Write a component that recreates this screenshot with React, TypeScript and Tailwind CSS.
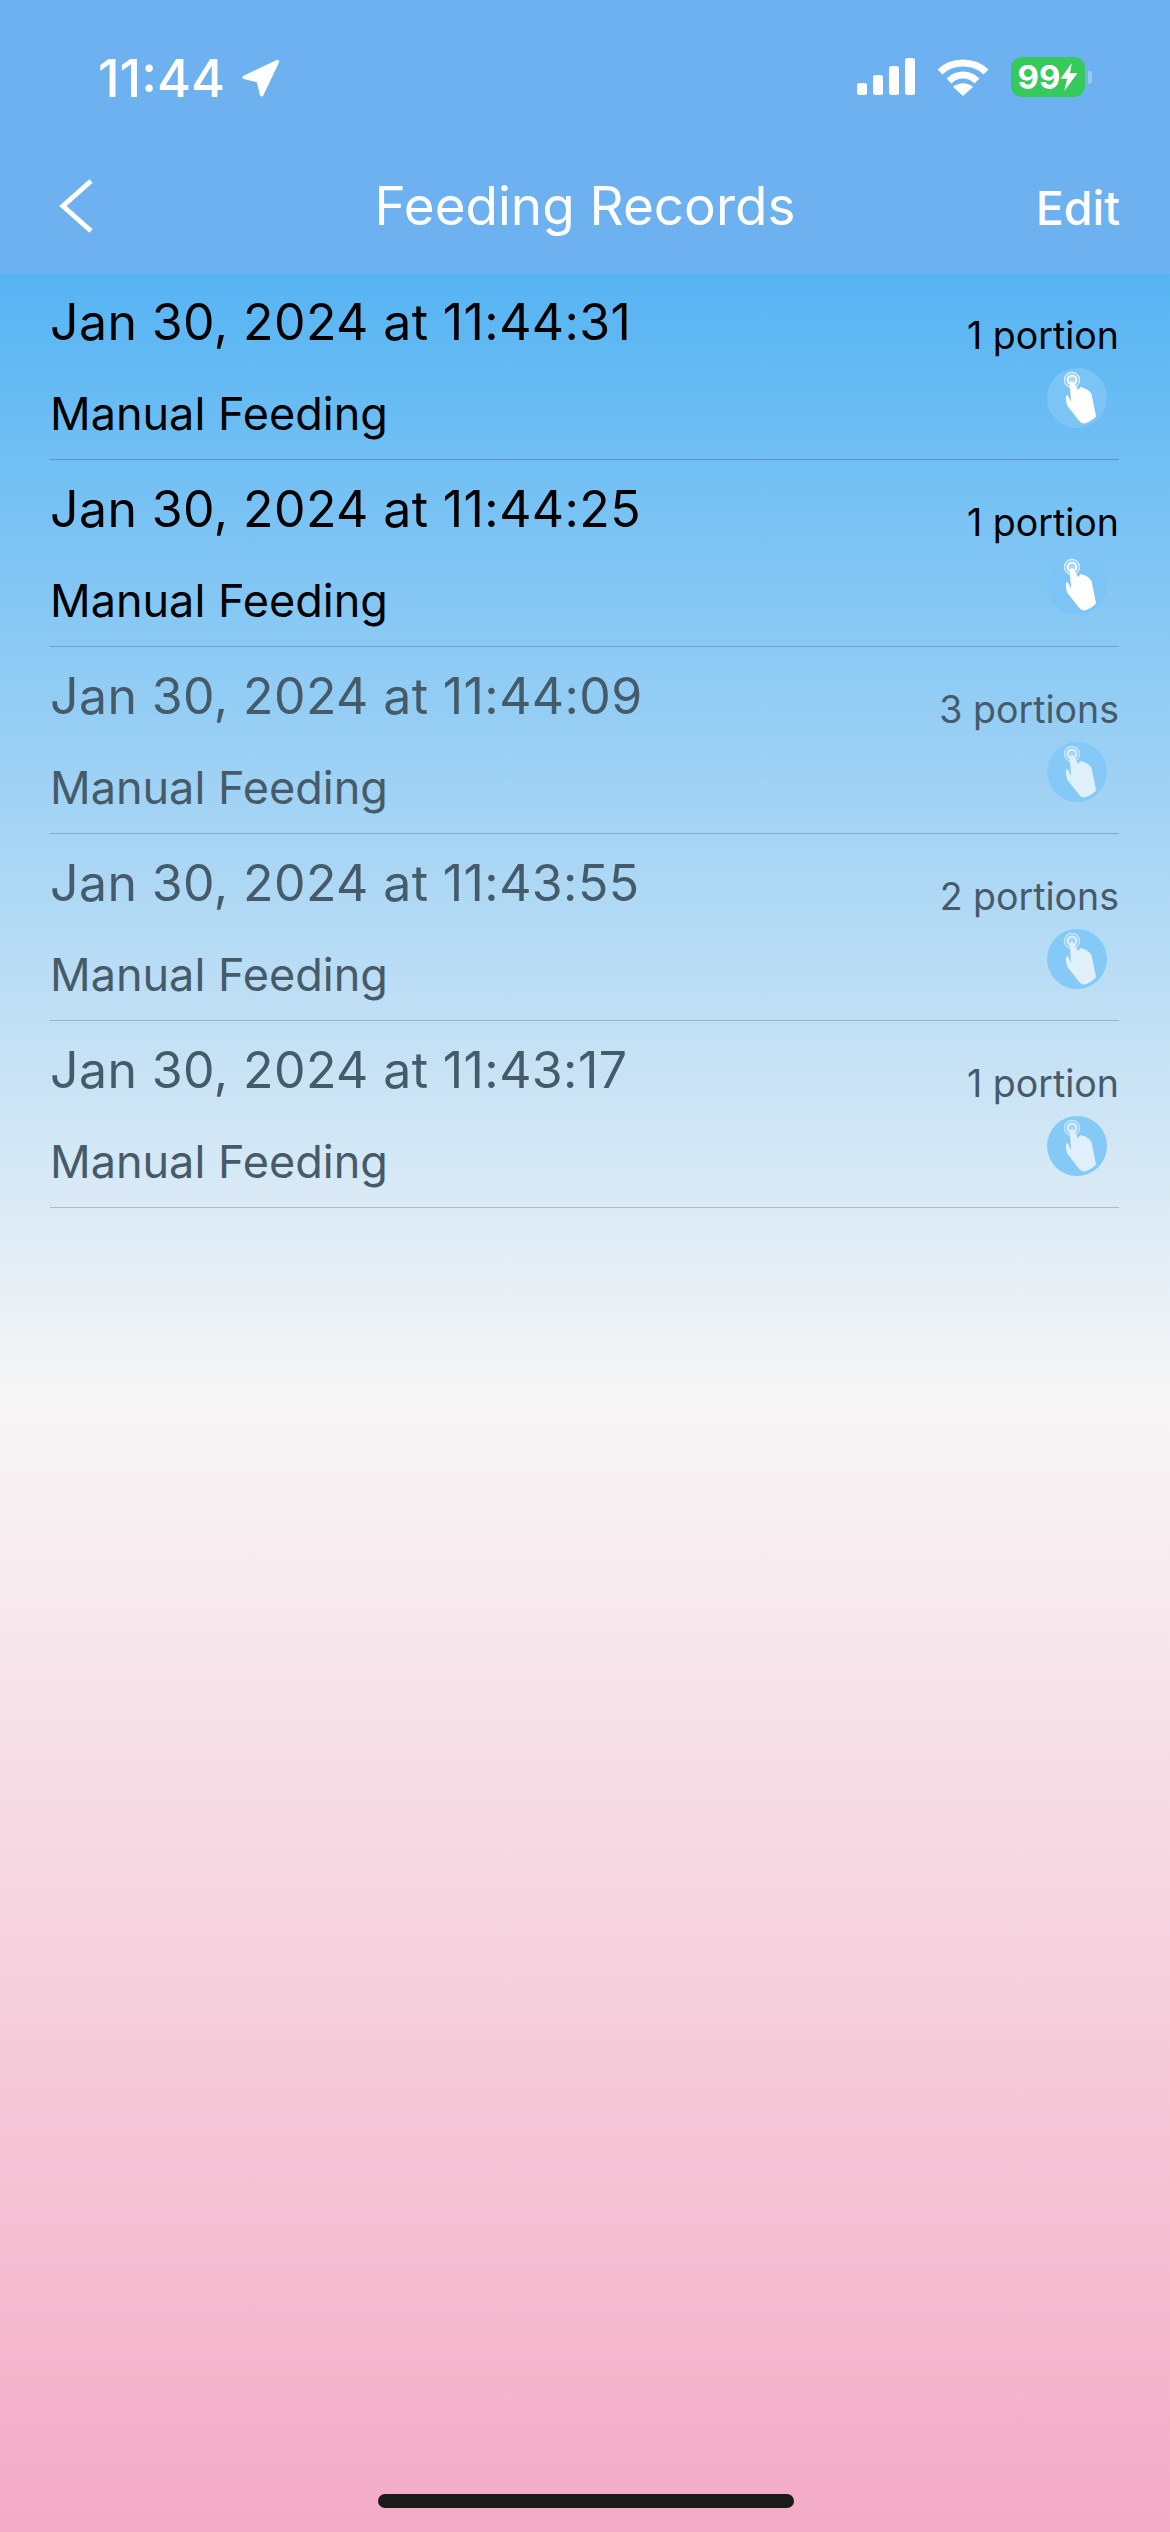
import { Navigation } from "lucide-react";

const records = [
  { time: "Jan 30, 2024 at 11:44:31", portions: "1 portion", faded: false },
  { time: "Jan 30, 2024 at 11:44:25", portions: "1 portion", faded: false },
  { time: "Jan 30, 2024 at 11:44:09", portions: "3 portions", faded: true },
  { time: "Jan 30, 2024 at 11:43:55", portions: "2 portions", faded: true },
  { time: "Jan 30, 2024 at 11:43:17", portions: "1 portion", faded: true },
];

function TapIcon({ faded }: { faded: boolean }) {
  const color = faded ? "#dff0fb" : "#ffffff";
  return (
    <svg viewBox="0 0 60 60" className="w-full h-full">
      <circle cx="25" cy="12" r="7.5" fill="none" stroke={color} strokeWidth="1.4" opacity="0.75" />
      <circle cx="25" cy="12" r="4.5" fill={color} fillOpacity="0.35" stroke={color} strokeWidth="2" />
      <path
        d="M22.5 15c.6-2 3.5-2.5 4.6-.6L31 22l2-2.5c.8-1 2.4-.6 3 .4l1 .2c3 1.2 6 3.2 7.5 6l4.5 22-.5 1c-3 3-7 5.5-11 6.5-2.5 0-4-1-6-3.5L20.5 38c-1.2-3-2-7-1.5-10 .3-1 1.6-1 2.2 0l3 6z"
        fill={color}
      />
    </svg>
  );
}

function Row({ time, portions, faded }: (typeof records)[number]) {
  const text = faded ? "text-[#465b69]" : "text-black";
  return (
    <div className="h-[187px] border-b border-[#00000033] flex justify-between">
      <div className={`flex flex-col ${text}`}>
        <div className="text-[50px] leading-[60px] mt-[19px] tracking-[0.4px]">{time}</div>
        <div className="text-[45px] leading-[54px] mt-[35px]">Manual Feeding</div>
      </div>
      <div className="flex flex-col items-end">
        <div className={`text-[37.5px] leading-[44px] mt-[41px] ${text}`}>{portions}</div>
        <div
          className={`w-[60px] h-[60px] rounded-full mt-[10px] mr-[12px] ${faded ? "bg-[#85c9f7]" : "bg-[#7cc4f6]"}`}
        >
          <TapIcon faded={faded} />
        </div>
      </div>
    </div>
  );
}

export default function App() {
  return (
    <div
      className="relative w-[1170px] h-[2532px] overflow-hidden bg-[linear-gradient(180deg,#56b4f3_0px,#56b4f3_274px,#f7f6f6_1400px,#f4abc5_2532px)]"
      style={{ fontFamily: "Inter, 'Noto Sans', sans-serif" }}
    >
      <header className="h-[274px] bg-[#6eb1f0] text-white flex flex-col">
        <div className="h-[150px] flex items-start justify-between pl-[98px] pr-[78px] pt-[50px]">
          <div className="flex items-center gap-[14px]">
            <span className="text-[52px] leading-[58px] font-medium">11:44</span>
            <Navigation className="w-[42px] h-[42px] fill-white" strokeWidth={2} />
          </div>
          <div className="flex items-center mt-[7px]">
            <svg viewBox="0 0 58 37" className="w-[58px] h-[37px] mt-[-1px]" fill="white">
              <rect x="0" y="25" width="10" height="12" rx="2.5" />
              <rect x="16" y="17" width="10" height="20" rx="2.5" />
              <rect x="32" y="8" width="10" height="29" rx="2.5" />
              <rect x="48" y="0" width="10" height="37" rx="2.5" />
            </svg>
            <svg viewBox="0 0 52 37" className="w-[52px] h-[37px] ml-[22px]" fill="none" stroke="white" strokeWidth="7">
              <path d="M3 13C15 1 37 1 49 13" />
              <path d="M12 22C20 14 32 14 40 22" />
              <path d="M26 37L16 28C22 23 30 23 36 28Z" fill="white" stroke="none" />
            </svg>
            <div className="ml-[22px] w-[74px] h-[40px] rounded-[11px] bg-[#36c95c] text-[33px] leading-[40px] font-bold flex items-center justify-center">
              99
              <svg viewBox="0 0 18 30" className="w-[18px] h-[28px]" fill="white">
                <path d="M12 0L0 17h7l-3 13L18 11h-8z" />
              </svg>
            </div>
            <div className="ml-[3px] w-[4px] h-[13px] rounded-r-full bg-white/30" />
          </div>
        </div>
        <div className="flex-1 relative flex items-center justify-between pl-[59px] pr-[50px] pb-[8px]">
          <svg viewBox="0 0 34 54" className="w-[34px] h-[54px] mb-[4px]" fill="none" stroke="white" strokeWidth="5">
            <path d="M32 2L4 27l28 25" />
          </svg>
          <div className="absolute left-0 right-0 text-center text-[53px] leading-[60px] pb-[4px]">Feeding Records</div>
          <div className="text-[46.5px] leading-[50px] font-medium">Edit</div>
        </div>
      </header>
      <main className="pl-[50px] pr-[51px] -mt-[1px]">
        {records.map((r) => (
          <Row key={r.time} {...r} />
        ))}
      </main>
      <div className="absolute bottom-[24px] left-[378px] w-[416px] h-[14px] rounded-full bg-[#1a1a1a]" />
    </div>
  );
}
